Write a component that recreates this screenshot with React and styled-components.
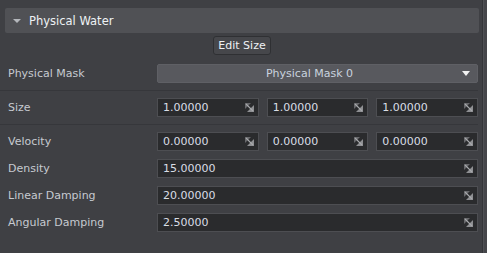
import React from 'react';
import styled, { createGlobalStyle } from 'styled-components';

const Global = createGlobalStyle`
  html, body { margin: 0; padding: 0; background: #3f4044; }
  body {
    font-family: "DejaVu Sans", Verdana, sans-serif;
    font-size: 11px;
    color: #c8ccd2;
  }
`;

const Page = styled.div`
  width: 487px;
  height: 253px;
  display: flex;
  overflow: hidden;
  background: #3f4044;
`;

const Main = styled.div`
  flex: 1;
  padding: 8px 3px 0 5px;
  display: flex;
  flex-direction: column;
`;

const Scrollbar = styled.div`
  width: 4px;
  border-left: 1px solid #343539;
  box-shadow: inset 1px 0 0 #505155;
  background: #45464a;
`;

const Header = styled.div`
  height: 25px;
  background: #505155;
  border-radius: 2px;
  display: flex;
  align-items: center;
  padding-left: 8px;
  gap: 8px;
  color: #eef1f4;
  font-size: 11.5px;
`;

const Caret = styled.span`
  width: 0;
  height: 0;
  border-left: 4px solid transparent;
  border-right: 4px solid transparent;
  border-top: 4px solid #b4b7bc;
`;

const ButtonRow = styled.div`
  display: flex;
  justify-content: center;
  margin-top: 3px;
`;

const Button = styled.div`
  height: 17px;
  padding: 0 4px;
  display: flex;
  align-items: center;
  background: #46474b;
  border: 1px solid #2f3033;
  border-radius: 3px;
  color: #eef1f4;
`;

const Row = styled.div`
  display: grid;
  grid-template-columns: 152px 1fr;
  align-items: center;
  height: 19px;
  margin-top: ${p => p.$top}px;
  padding-right: 1px;
`;

const Label = styled.div`
  padding-left: 3px;
  color: #c6cad0;
  white-space: nowrap;
`;

const Fields = styled.div`
  display: grid;
  grid-template-columns: repeat(${p => p.$count}, 1fr);
  column-gap: 8px;
  height: 19px;
`;

const Field = styled.div`
  display: flex;
  align-items: center;
  justify-content: space-between;
  background: #2a2b2d;
  border: 1px solid #4d4e52;
  padding: 0 4px 0 5px;
  color: #d9dee5;
  box-sizing: border-box;
  height: 19px;
`;

const Select = styled.div`
  position: relative;
  height: 19px;
  box-sizing: border-box;
  background: #58595e;
  border: 1px solid #5f6065;
  border-radius: 2px;
  display: flex;
  align-items: center;
  justify-content: center;
  padding-right: 16px;
  color: #c9d3de;
`;

const Arrow = styled.span`
  position: absolute;
  right: 7px;
  top: 6px;
  width: 0;
  height: 0;
  border-left: 4px solid transparent;
  border-right: 4px solid transparent;
  border-top: 5px solid #f2f2f2;
`;

const Separator = styled.div`
  height: 1px;
  background: #36373b;
  margin: ${p => p.$top}px 1px 0 -5px;
`;

const DragIcon = () => (
  <svg width="9" height="9" viewBox="0 0 9 9">
    <polygon points="0,0 6,0 0,6" fill="#68696c" />
    <polygon points="9,2 9,9 2,9" fill="#8e8f92" />
    <line x1="1" y1="1" x2="8" y2="8" stroke="#a9aaad" strokeWidth="1.1" />
  </svg>
);

const NumField = ({ value }) => (
  <Field>
    <span>{value}</span>
    <DragIcon />
  </Field>
);

export default function App() {
  return (
    <Page>
      <Global />
      <Main>
        <Header>
          <Caret />
          <span>Physical Water</span>
        </Header>
        <ButtonRow>
          <Button>Edit Size</Button>
        </ButtonRow>
        <Row $top={9}>
          <Label>Physical Mask</Label>
          <Select>
            Physical Mask 0
            <Arrow />
          </Select>
        </Row>
        <Separator $top={7} />
        <Row $top={7}>
          <Label>Size</Label>
          <Fields $count={3}>
            <NumField value="1.00000" />
            <NumField value="1.00000" />
            <NumField value="1.00000" />
          </Fields>
        </Row>
        <Separator $top={7} />
        <Row $top={7}>
          <Label>Velocity</Label>
          <Fields $count={3}>
            <NumField value="0.00000" />
            <NumField value="0.00000" />
            <NumField value="0.00000" />
          </Fields>
        </Row>
        <Row $top={8}>
          <Label>Density</Label>
          <Fields $count={1}>
            <NumField value="15.00000" />
          </Fields>
        </Row>
        <Row $top={8}>
          <Label>Linear Damping</Label>
          <Fields $count={1}>
            <NumField value="20.00000" />
          </Fields>
        </Row>
        <Row $top={8}>
          <Label>Angular Damping</Label>
          <Fields $count={1}>
            <NumField value="2.50000" />
          </Fields>
        </Row>
      </Main>
      <Scrollbar />
    </Page>
  );
}
